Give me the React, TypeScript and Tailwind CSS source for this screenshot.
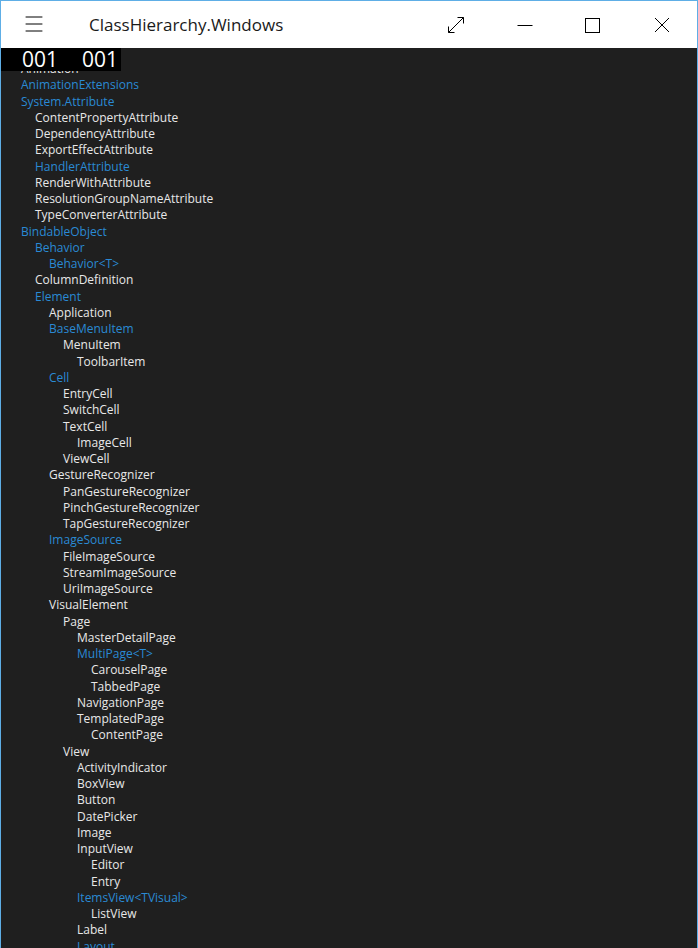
import { Menu } from 'lucide-react';

type Node = { name: string; level: number; blue?: boolean };

const nodes: Node[] = [
  { name: 'Animation', level: 0 },
  { name: 'AnimationExtensions', level: 0, blue: true },
  { name: 'System.Attribute', level: 0, blue: true },
  { name: 'ContentPropertyAttribute', level: 1 },
  { name: 'DependencyAttribute', level: 1 },
  { name: 'ExportEffectAttribute', level: 1 },
  { name: 'HandlerAttribute', level: 1, blue: true },
  { name: 'RenderWithAttribute', level: 1 },
  { name: 'ResolutionGroupNameAttribute', level: 1 },
  { name: 'TypeConverterAttribute', level: 1 },
  { name: 'BindableObject', level: 0, blue: true },
  { name: 'Behavior', level: 1, blue: true },
  { name: 'Behavior<T>', level: 2, blue: true },
  { name: 'ColumnDefinition', level: 1 },
  { name: 'Element', level: 1, blue: true },
  { name: 'Application', level: 2 },
  { name: 'BaseMenuItem', level: 2, blue: true },
  { name: 'MenuItem', level: 3 },
  { name: 'ToolbarItem', level: 4 },
  { name: 'Cell', level: 2, blue: true },
  { name: 'EntryCell', level: 3 },
  { name: 'SwitchCell', level: 3 },
  { name: 'TextCell', level: 3 },
  { name: 'ImageCell', level: 4 },
  { name: 'ViewCell', level: 3 },
  { name: 'GestureRecognizer', level: 2 },
  { name: 'PanGestureRecognizer', level: 3 },
  { name: 'PinchGestureRecognizer', level: 3 },
  { name: 'TapGestureRecognizer', level: 3 },
  { name: 'ImageSource', level: 2, blue: true },
  { name: 'FileImageSource', level: 3 },
  { name: 'StreamImageSource', level: 3 },
  { name: 'UriImageSource', level: 3 },
  { name: 'VisualElement', level: 2 },
  { name: 'Page', level: 3 },
  { name: 'MasterDetailPage', level: 4 },
  { name: 'MultiPage<T>', level: 4, blue: true },
  { name: 'CarouselPage', level: 5 },
  { name: 'TabbedPage', level: 5 },
  { name: 'NavigationPage', level: 4 },
  { name: 'TemplatedPage', level: 4 },
  { name: 'ContentPage', level: 5 },
  { name: 'View', level: 3 },
  { name: 'ActivityIndicator', level: 4 },
  { name: 'BoxView', level: 4 },
  { name: 'Button', level: 4 },
  { name: 'DatePicker', level: 4 },
  { name: 'Image', level: 4 },
  { name: 'InputView', level: 4 },
  { name: 'Editor', level: 5 },
  { name: 'Entry', level: 5 },
  { name: 'ItemsView<TVisual>', level: 4, blue: true },
  { name: 'ListView', level: 5 },
  { name: 'Label', level: 4 },
  { name: 'Layout', level: 4, blue: true },
  { name: 'AbsoluteLayout', level: 5 },
];

const indent = ['pl-0', 'pl-[14px]', 'pl-[28px]', 'pl-[42px]', 'pl-[56px]', 'pl-[70px]'];

function TitleBar() {
  return (
    <div className="flex h-[47px] shrink-0 items-center bg-white text-black">
      <div className="flex w-[68px] items-center justify-center pr-[2px] pb-[1px]">
        <Menu size={24} strokeWidth={1} />
      </div>
      <div className="flex-1 pl-[20px] text-[17px] text-[#1a1a1a]">ClassHierarchy.Windows</div>
      <div className="flex h-full">
        <button className="flex w-[69px] items-center justify-center">
          <svg width="18" height="18" viewBox="0 0 18 18" fill="none" stroke="black" strokeWidth="1">
            <path d="M1.5 16.5 L16.5 1.5" />
            <path d="M10.5 1.5 H16.5 V7.5" />
            <path d="M1.5 10.5 V16.5 H7.5" />
          </svg>
        </button>
        <button className="flex w-[69px] items-center justify-center">
          <svg width="16" height="16" viewBox="0 0 16 16" fill="none" stroke="black" strokeWidth="1">
            <path d="M0.5 8.5 H15.5" />
          </svg>
        </button>
        <button className="flex w-[69px] items-center justify-center pr-[3px]">
          <svg width="16" height="16" viewBox="0 0 16 16" fill="none" stroke="black" strokeWidth="1">
            <rect x="1.5" y="1.5" width="14" height="14" />
          </svg>
        </button>
        <button className="flex w-[69px] items-center justify-center pr-[2px]">
          <svg width="16" height="16" viewBox="0 0 16 16" fill="none" stroke="black" strokeWidth="1">
            <path d="M1 1 L15 15 M15 1 L1 15" />
          </svg>
        </button>
      </div>
    </div>
  );
}

export default function App() {
  return (
    <div
      className="flex h-[948px] w-[698px] flex-col overflow-hidden border-x border-t border-[#5eaee6] bg-[#1f1f1f]"
      style={{ fontFamily: '"Open Sans", "Noto Sans", sans-serif' }}
    >
      <TitleBar />
      <div className="relative flex-1 overflow-hidden">
        <div className="absolute left-0 top-0 z-10 flex h-[23px] w-[120px] items-center gap-[24px] bg-black pl-[21px] text-[21px] leading-none text-white">
          <span>001</span>
          <span>001</span>
        </div>
        <div className="flex flex-col pl-[20px] pt-[13px]">
          {nodes.map((n, i) => (
            <div
              key={i}
              className={`${indent[n.level]} h-[16.25px] text-[12px] leading-[16.25px] whitespace-nowrap ${
                n.blue ? 'text-[#2a8ad4]' : 'text-[#e8e8e8]'
              }`}
            >
              {n.name}
            </div>
          ))}
        </div>
      </div>
    </div>
  );
}
